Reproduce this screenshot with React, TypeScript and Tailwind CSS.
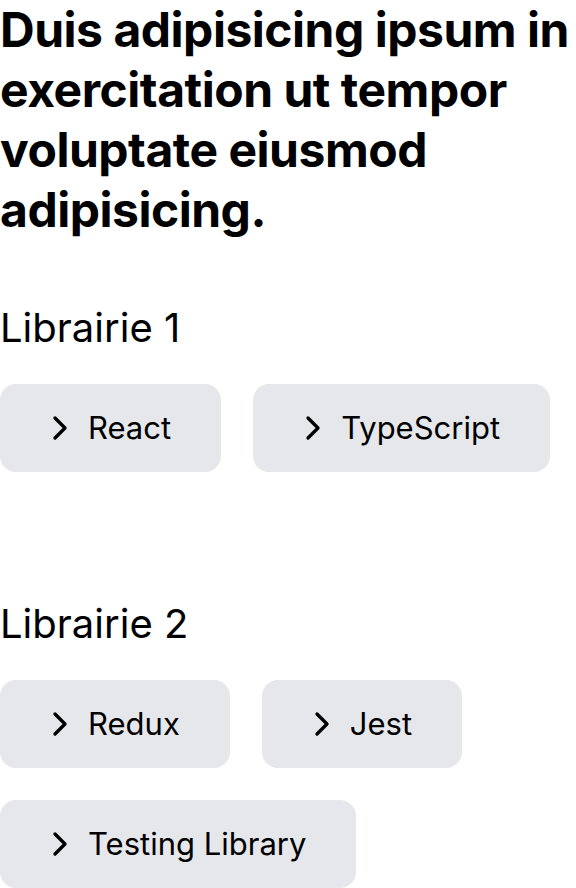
import React from 'react';
import { ChevronRight } from 'lucide-react';

const sections = [
  { title: 'Librairie 1', items: ['React', 'TypeScript'] },
  { title: 'Librairie 2', items: ['Redux', 'Jest', 'Testing Library'] },
];

export default function App() {
  return (
    <div className="bg-white text-black" style={{ fontFamily: 'Inter, "Liberation Sans", sans-serif' }}>
      <h1 className="text-5xl font-bold leading-[60px] tracking-[-0.01em]">
        Duis adipisicing ipsum in exercitation ut tempor voluptate eiusmod adipisicing.
      </h1>

      <div className="flex flex-col gap-32 pt-16">
        {sections.map((section) => (
          <section key={section.title}>
            <h2 className="text-[40px] leading-[48px] font-normal mb-8">{section.title}</h2>
            <div className="flex flex-wrap gap-8">
              {section.items.map((item) => (
                <button
                  key={item}
                  className="flex items-center gap-2 bg-gray-200 rounded-2xl pl-10 pr-[50px] py-6 text-[31px] leading-9"
                >
                  <ChevronRight size={40} />
                  <span>{item}</span>
                </button>
              ))}
            </div>
          </section>
        ))}
      </div>
    </div>
  );
}
